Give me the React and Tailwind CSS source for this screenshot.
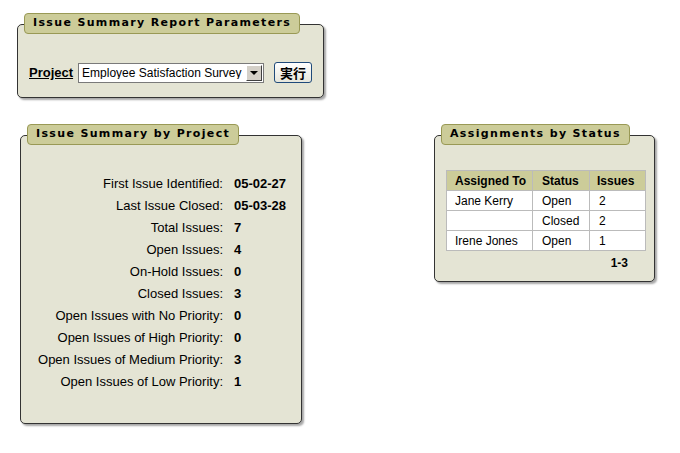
import React from "react";

const font = { fontFamily: '"Liberation Sans", Arial, sans-serif' };

function Panel({ title, width, height, tabLeft = 7, children }) {
  return (
    <div className="flex flex-col" style={{ width }}>
      <div
        className="relative z-10 self-start h-[21px] pl-[8px] pr-[8px] flex items-center rounded-[4px] border border-[#999955] bg-[#cccc99] text-[11px] font-bold tracking-[1.35px] text-black"
        style={{ marginLeft: tabLeft, fontFamily: '"DejaVu Sans", Verdana, sans-serif' }}
      >
        {title}
      </div>
      <div
        className="-mt-[10px] rounded-[5px] border border-[#333333] bg-[#e4e4d4] shadow-[2px_2px_2px_rgba(0,0,0,0.35)]"
        style={{ height }}
      >
        {children}
      </div>
    </div>
  );
}

const summary = [
  ["First Issue Identified:", "05-02-27"],
  ["Last Issue Closed:", "05-03-28"],
  ["Total Issues:", "7"],
  ["Open Issues:", "4"],
  ["On-Hold Issues:", "0"],
  ["Closed Issues:", "3"],
  ["Open Issues with No Priority:", "0"],
  ["Open Issues of High Priority:", "0"],
  ["Open Issues of Medium Priority:", "3"],
  ["Open Issues of Low Priority:", "1"],
];

const assignments = [
  ["Jane Kerry", "Open", "2"],
  ["", "Closed", "2"],
  ["Irene Jones", "Open", "1"],
];

export default function App() {
  return (
    <div className="w-[680px] h-[453px] bg-white text-black overflow-hidden" style={font}>
      {/* parameters */}
      <div className="pt-[13px] pl-[17px]">
        <Panel title="Issue Summary Report Parameters" width={307} height={74}>
          <div className="flex items-center pt-[37px] pl-[11px]">
            <span className="text-[13px] font-bold underline">Project</span>
            <div className="ml-[5px] w-[186px] h-[20px] flex items-center bg-white border border-[#7a7a7a]">
              <span className="flex-1 pl-[3px] text-[12px] leading-none whitespace-nowrap overflow-hidden">
                Employee Satisfaction Survey
              </span>
              <div className="w-[16px] h-[16px] mr-[1px] flex items-center justify-center bg-[#d4d0c8] border border-t-white border-l-white border-r-[#404040] border-b-[#404040]">
                <div className="w-0 h-0 border-l-[4px] border-r-[4px] border-t-[4px] border-l-transparent border-r-transparent border-t-black" />
              </div>
            </div>
            <button className="ml-[10px] w-[38px] h-[21px] rounded-[3px] border border-[#1f4a7a] bg-gradient-to-b from-white to-[#e6e6dc] text-[13px] font-bold leading-none" style={{ fontFamily: '"Noto Sans CJK JP", sans-serif' }}>
              実行
            </button>
          </div>
        </Panel>
      </div>

      <div className="flex pt-[26px]">
        {/* summary */}
        <div className="pl-[20px]">
          <Panel title="Issue Summary by Project" width={282} height={289}>
            <div className="pt-[37px] grid grid-cols-[202px_auto] gap-x-[11px] text-[13px] leading-[22px]">
              {summary.map(([label, value]) => (
                <React.Fragment key={label}>
                  <div className="text-right whitespace-nowrap">{label}</div>
                  <div className="font-bold">{value}</div>
                </React.Fragment>
              ))}
            </div>
          </Panel>
        </div>

        {/* assignments */}
        <div className="pl-[132px]">
          <Panel title="Assignments by Status" width={221} height={147}>
            <div className="pt-[34px] pl-[11px]">
              <table className="border-collapse text-[12px] bg-white">
                <thead>
                  <tr className="bg-[#cccc99] h-[20px]">
                    <th className="w-[86px] border border-[#bbbbbb] pl-[8px] text-left font-bold">Assigned To</th>
                    <th className="w-[57px] border border-[#bbbbbb] pl-[9px] text-left font-bold">Status</th>
                    <th className="w-[56px] border border-[#bbbbbb] pl-[7px] text-left font-bold">Issues</th>
                  </tr>
                </thead>
                <tbody>
                  {assignments.map(([who, status, n], i) => (
                    <tr key={i} className="h-[20px]">
                      <td className="border border-[#bbbbbb] pl-[8px]">{who}</td>
                      <td className="border border-[#bbbbbb] pl-[9px]">{status}</td>
                      <td className="border border-[#bbbbbb] pl-[9px]">{n}</td>
                    </tr>
                  ))}
                </tbody>
              </table>
              <div className="w-[200px] mt-[3px] pr-[18px] text-right text-[12px] font-bold leading-[18px]">1-3</div>
            </div>
          </Panel>
        </div>
      </div>
    </div>
  );
}
